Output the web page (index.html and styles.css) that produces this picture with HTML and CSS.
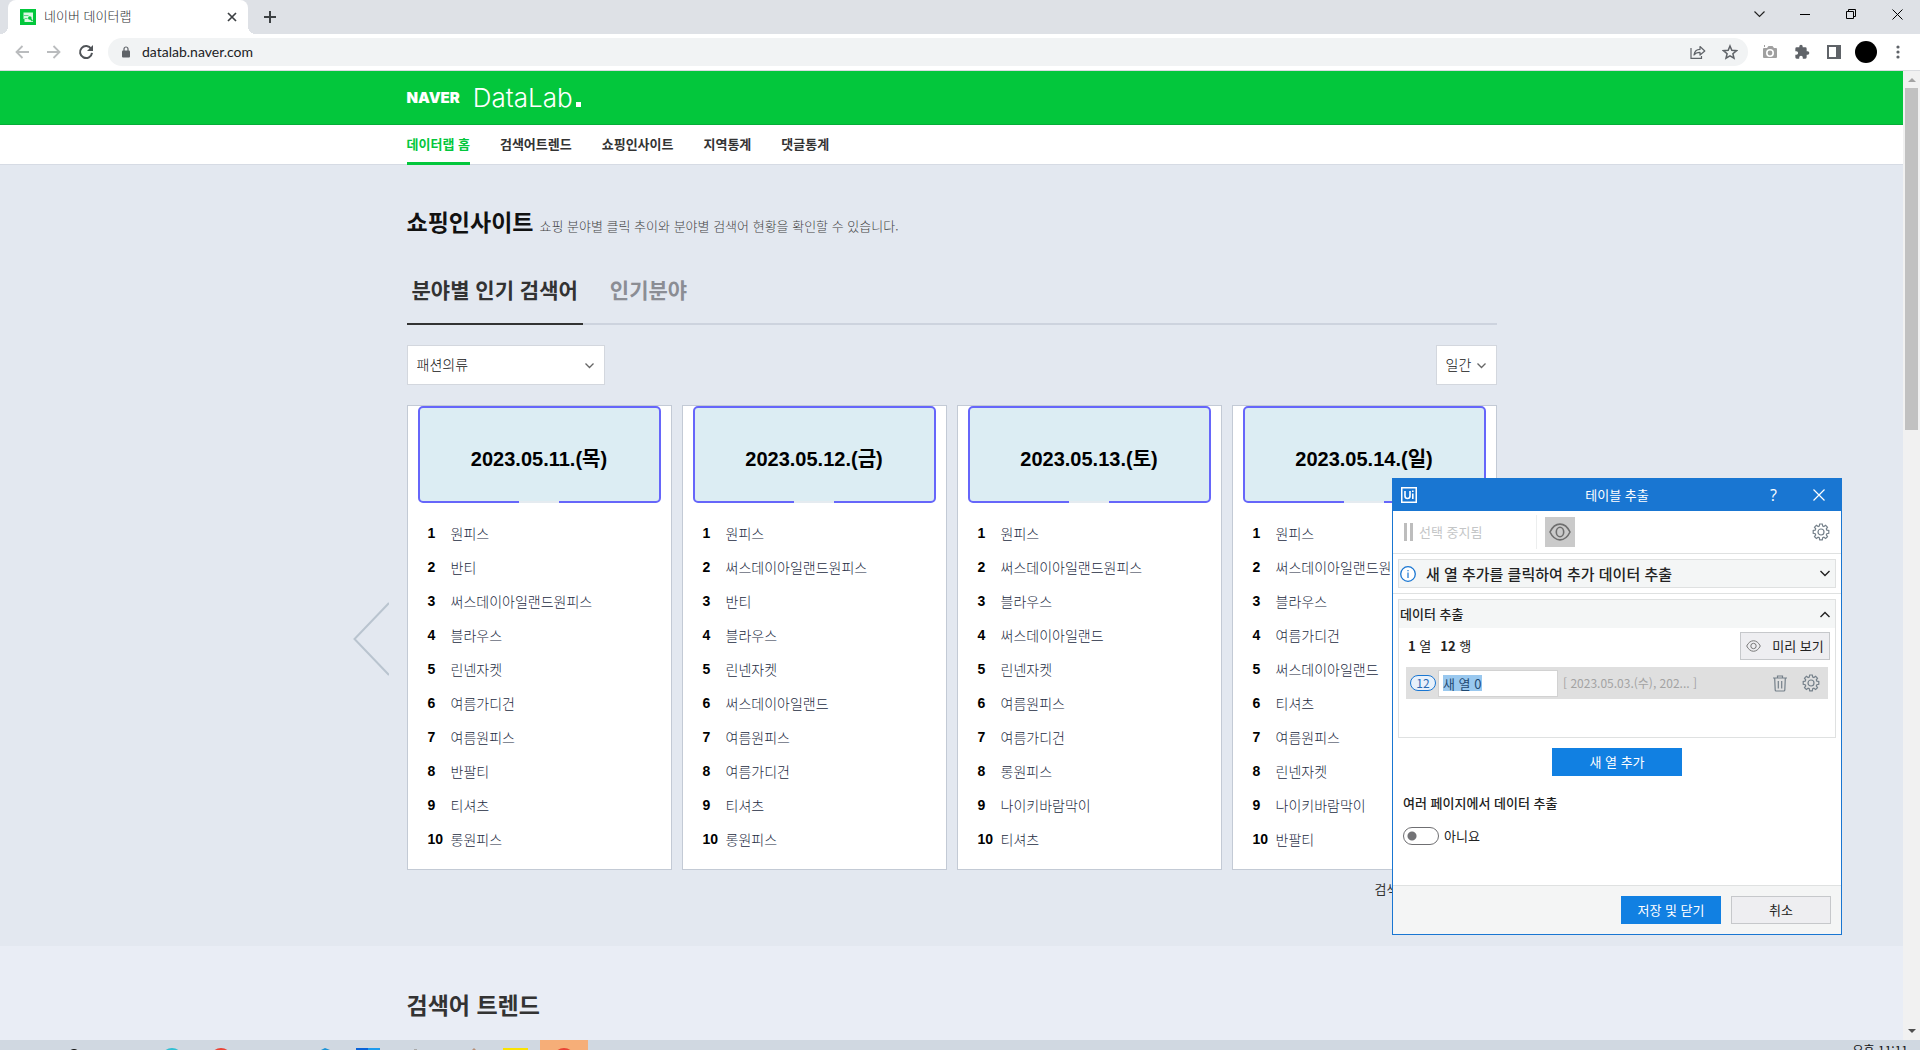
FILE: index.html
```html
<!DOCTYPE html>
<html lang="ko">
<head>
<meta charset="utf-8">
<meta name="viewport" content="width=device-width, initial-scale=1">
<title>네이버 데이터랩</title>
<link rel="stylesheet" href="styles.css">
</head>
<body>
<div class="tabstrip">
  <div class="tab">
    <svg class="favicon" width="16" height="16" viewBox="0 0 16 16"><rect width="16" height="16" fill="#03c73c"/><path d="M3.500 3.500H13V13H4.500V10H3.500z" fill="#dcf7e4"/><path d="M3.500 6.500h5M4.500 9.500h3" stroke="#5fdc85"/><circle cx="9.800" cy="9" r="1.800" fill="#03c73c"/><path d="M10.500 10l2 2" stroke="#03c73c" stroke-width="1.500"/></svg>
    <span class="tab-title">네이버 데이터랩</span>
    <button class="icon-btn tab-close" aria-label="탭 닫기"><svg width="10" height="10" viewBox="0 0 10 10"><path d="M1 1l8 8M9 1L1 9" stroke="#3c4043" stroke-width="1.700"/></svg></button>
  </div>
  <button class="icon-btn new-tab" aria-label="새 탭"><svg width="12" height="12" viewBox="0 0 12 12"><path d="M6 0v12M0 6h12" stroke="#3c4043" stroke-width="2"/></svg></button>
  <div class="window-controls">
    <button class="icon-btn" aria-label="탭 검색"><svg width="11" height="7" viewBox="0 0 11 7"><path d="M.5.5l5 5 5-5" fill="none" stroke="#222" stroke-width="1.200"/></svg></button>
    <button class="icon-btn" aria-label="최소화"><svg width="10" height="10" viewBox="0 0 10 10"><path d="M0 5.500h10" stroke="#000"/></svg></button>
    <button class="icon-btn" aria-label="이전 크기로 복원"><svg width="10" height="10" viewBox="0 0 10 10"><path d="M.5 2.500h7v7h-7zM2.500 2.500v-2h7v7h-2" fill="none" stroke="#000"/></svg></button>
    <button class="icon-btn" aria-label="닫기"><svg width="11" height="11" viewBox="0 0 11 11"><path d="M.5.5l10 10M10.500.5l-10 10" stroke="#000"/></svg></button>
  </div>
</div>

<div class="toolbar">
  <button class="icon-btn tool" aria-label="뒤로"><svg width="14" height="14" viewBox="0 0 14 14"><path d="M14 7H1.500M7.500 1l-6 6 6 6" fill="none" stroke="#babcbe" stroke-width="1.800"/></svg></button>
  <button class="icon-btn tool" aria-label="앞으로"><svg width="14" height="14" viewBox="0 0 14 14"><path d="M0 7h12.500M6.500 1l6 6-6 6" fill="none" stroke="#babcbe" stroke-width="1.800"/></svg></button>
  <button class="icon-btn tool" aria-label="새로고침"><svg width="16" height="16" viewBox="0 0 16 16"><path d="M13.200 5A6 6 0 1 0 14 8.800" fill="none" stroke="#505458" stroke-width="2"/><path d="M15 1v6H9z" fill="#505458"/></svg></button>
  <div class="omnibox">
    <svg width="8" height="12" viewBox="0 0 8 12"><rect y="4.500" width="8" height="7" rx="1" fill="#5f6368"/><path d="M2 5V3a2 2 0 0 1 4 0v2" fill="none" stroke="#5f6368" stroke-width="1.200"/></svg>
    <input class="url" type="text" value="datalab.naver.com" aria-label="주소창">
    <button class="icon-btn tool" aria-label="공유"><svg width="16" height="14" viewBox="0 0 16 14"><path d="M1 3v10.300h10.500V11" fill="none" stroke="#5f6368" stroke-width="1.200"/><path d="M4 10c.5-3.500 2.500-5.500 6-5.600V1.500L14.800 6 10 10V7.400C7.500 7.400 5.500 8 4 10z" fill="none" stroke="#5f6368" stroke-width="1.200" stroke-linejoin="round"/></svg></button>
    <button class="icon-btn tool" aria-label="북마크"><svg width="16" height="16" viewBox="0 0 16 16"><path d="M8 2l1.800 4.300 4.700.4-3.600 3 1.100 4.500L8 11.800l-4 2.400 1.100-4.500-3.600-3 4.700-.4z" fill="none" stroke="#5f6368" stroke-width="1.500"/></svg></button>
  </div>
  <button class="icon-btn tool" aria-label="화면 캡처"><svg width="16" height="14" viewBox="0 0 16 14"><path d="M2 3h3l1.500-2h4L12 3h2a1 1 0 0 1 1 1v8a1 1 0 0 1-1 1H2a1 1 0 0 1-1-1V4a1 1 0 0 1 1-1z" fill="#a0a0a0"/><circle cx="8" cy="8" r="3.200" fill="none" stroke="#fff" stroke-width="1.600"/><path d="M2.500 0v2" stroke="#a0a0a0"/></svg></button>
  <button class="icon-btn tool" aria-label="확장 프로그램"><svg width="16" height="16" viewBox="0 0 24 24"><path fill="#5f6368" d="M20.500 11H19V7a2 2 0 0 0-2-2h-4V3.500a2.500 2.500 0 0 0-5 0V5H4a2 2 0 0 0-2 2v3.800h1.500a2.700 2.700 0 0 1 0 5.400H2V20a2 2 0 0 0 2 2h3.800v-1.500a2.700 2.700 0 0 1 5.400 0V22H17a2 2 0 0 0 2-2v-4h1.500a2.500 2.500 0 0 0 0-5z"/></svg></button>
  <button class="icon-btn tool" aria-label="측면 패널"><svg width="14" height="14" viewBox="0 0 14 14"><rect x="1" y="1" width="12" height="12" fill="none" stroke="#5f6368" stroke-width="2"/><rect x="9" width="5" height="14" fill="#5f6368"/></svg></button>
  <button class="icon-btn tool" aria-label="프로필"><span class="avatar"></span></button>
  <button class="icon-btn tool" aria-label="메뉴"><svg width="4" height="14" viewBox="0 0 4 14"><g fill="#5f6368"><circle cx="2" cy="2" r="1.600"/><circle cx="2" cy="7" r="1.600"/><circle cx="2" cy="12" r="1.600"/></g></svg></button>
</div>

<div class="viewport">
  <div class="page">
    <header class="site-header">
      <div class="wrap">
        <a class="logo" href="#"><span class="logo-naver">NAVER</span><span class="logo-lab">DataLab<i></i></span></a>
      </div>
    </header>
    <nav class="site-nav">
      <div class="wrap">
        <a class="active" href="#">데이터랩 홈</a><a href="#">검색어트렌드</a><a href="#">쇼핑인사이트</a><a href="#">지역통계</a><a href="#">댓글통계</a>
      </div>
    </nav>
    <main>
      <section class="insight">
        <div class="wrap">
          <div class="section-head"><h2>쇼핑인사이트</h2><p>쇼핑 분야별 클릭 추이와 분야별 검색어 현황을 확인할 수 있습니다.</p></div>
          <div class="subtabs"><a class="active" href="#">분야별 인기 검색어</a><a href="#">인기분야</a></div>
          <div class="filters">
            <div class="select select-category"><select aria-label="분야"><option>패션의류</option></select><svg width="9" height="6" viewBox="0 0 9 6"><path d="M.5.5l4 4 4-4" fill="none" stroke="#666" stroke-width="1.300"/></svg></div>
            <div class="select select-period"><select aria-label="기간"><option>일간</option></select><svg width="9" height="6" viewBox="0 0 9 6"><path d="M.5.5l4 4 4-4" fill="none" stroke="#666" stroke-width="1.300"/></svg></div>
          </div>
          <div class="carousel">
            <button class="icon-btn prev" aria-label="이전"><svg width="36" height="74" viewBox="0 0 36 74"><path d="M36 1L1.500 37 36 73" fill="none" stroke="#b9c4cf" stroke-width="2"/></svg></button>
            <article class="card"><h3>2023.05.11.(목)</h3><ol><li><b>1</b>원피스</li><li><b>2</b>반티</li><li><b>3</b>써스데이아일랜드원피스</li><li><b>4</b>블라우스</li><li><b>5</b>린넨자켓</li><li><b>6</b>여름가디건</li><li><b>7</b>여름원피스</li><li><b>8</b>반팔티</li><li><b>9</b>티셔츠</li><li><b>10</b>롱원피스</li></ol></article>
            <article class="card"><h3>2023.05.12.(금)</h3><ol><li><b>1</b>원피스</li><li><b>2</b>써스데이아일랜드원피스</li><li><b>3</b>반티</li><li><b>4</b>블라우스</li><li><b>5</b>린넨자켓</li><li><b>6</b>써스데이아일랜드</li><li><b>7</b>여름원피스</li><li><b>8</b>여름가디건</li><li><b>9</b>티셔츠</li><li><b>10</b>롱원피스</li></ol></article>
            <article class="card"><h3>2023.05.13.(토)</h3><ol><li><b>1</b>원피스</li><li><b>2</b>써스데이아일랜드원피스</li><li><b>3</b>블라우스</li><li><b>4</b>써스데이아일랜드</li><li><b>5</b>린넨자켓</li><li><b>6</b>여름원피스</li><li><b>7</b>여름가디건</li><li><b>8</b>롱원피스</li><li><b>9</b>나이키바람막이</li><li><b>10</b>티셔츠</li></ol></article>
            <article class="card"><h3>2023.05.14.(일)</h3><ol><li><b>1</b>원피스</li><li><b>2</b>써스데이아일랜드원피스</li><li><b>3</b>블라우스</li><li><b>4</b>여름가디건</li><li><b>5</b>써스데이아일랜드</li><li><b>6</b>티셔츠</li><li><b>7</b>여름원피스</li><li><b>8</b>린넨자켓</li><li><b>9</b>나이키바람막이</li><li><b>10</b>반팔티</li></ol></article>
          </div>
          <div class="more"><a href="#">검색어</a></div>
        </div>
      </section>
      <section class="trend">
        <div class="wrap"><h2>검색어 트렌드</h2></div>
      </section>
    </main>
  </div>
  <div class="scrollbar">
    <svg width="8" height="17" viewBox="0 0 8 17"><path d="M0 11l4-4 4 4z" fill="#a3a3a3"/></svg>
    <span class="track"><span class="thumb"></span></span>
    <svg width="8" height="17" viewBox="0 0 8 17"><path d="M0 6l4 4 4-4z" fill="#505050"/></svg>
  </div>
</div>

<footer class="taskbar">
  <svg width="600" height="10" viewBox="0 0 600 10">
    <rect x="540" width="48" height="10" fill="#f6ae78"/>
    <circle cx="74" cy="15" r="6" fill="#111"/>
    <circle cx="172" cy="19" r="11" fill="#31bfd3"/>
    <circle cx="221" cy="19" r="11" fill="#ea4335"/>
    <path d="M321 10l4-2 5 2z" fill="#1c93d6"/>
    <rect x="356" y="8" width="12" height="2" fill="#0a63d8"/><rect x="368" y="8" width="12" height="2" fill="#1d9bee"/>
    <path d="M414 9h3v1h-3z" fill="#aaa"/><path d="M472 10l2-2 2 2z" fill="#b89078"/>
    <rect x="503" y="8" width="25" height="2" fill="#fbe300"/>
    <circle cx="564" cy="19" r="11" fill="#ea4335"/>
  </svg>
  <span class="clock">오후 11:11</span>
</footer>

<div class="dialog" role="dialog" aria-labelledby="dialog-title">
  <div class="titlebar">
    <svg width="16" height="16" viewBox="0 0 16 16"><rect x=".75" y=".75" width="14.500" height="14.500" fill="none" stroke="#fff" stroke-width="1.500"/><path d="M4 4v5a2.500 2.500 0 0 0 5 0V4M11.800 6.500V12M11.800 3.500V5" fill="none" stroke="#fff" stroke-width="1.600"/></svg>
    <h1 id="dialog-title">테이블 추출</h1>
    <button class="icon-btn help" aria-label="도움말">?</button>
    <button class="icon-btn" aria-label="닫기"><svg width="12" height="12" viewBox="0 0 12 12"><path d="M.5.5l11 11M11.500.5l-11 11" stroke="#fff" stroke-width="1.200"/></svg></button>
  </div>
  <div class="dialog-tools">
    <button class="pause" disabled><svg width="9" height="18" viewBox="0 0 9 18"><path d="M0 0h3v18H0zM6 0h3v18H6z" fill="#bdbdbd"/></svg>선택 중지됨</button>
    <button class="icon-btn eye" aria-label="강조 표시"><svg width="22" height="18" viewBox="0 0 22 18"><path d="M1 9c5-10.500 15-10.500 20 0-5 10.500-15 10.500-20 0z" fill="none" stroke="#6e6e6e" stroke-width="1.600"/><ellipse cx="11" cy="9" rx="3.700" ry="4.700" fill="none" stroke="#6e6e6e" stroke-width="1.600"/></svg></button>
    <button class="icon-btn gear-btn" aria-label="설정"><svg class="gear" width="18" height="18" viewBox="0 0 18 18"><use href="#gear"/></svg></button>
  </div>
  <div class="info-zone">
    <button class="info"><svg width="16" height="16" viewBox="0 0 16 16"><circle cx="8" cy="8" r="7.300" fill="#fff" stroke="#1976d2" stroke-width="1.300"/><path d="M8 6.500V12M8 4v1.300" stroke="#1976d2" stroke-width="1.200"/></svg><span>새 열 추가를 클릭하여 추가 데이터 추출</span><svg width="10" height="7" viewBox="0 0 10 7"><path d="M.5 1L5 5.500 9.500 1" fill="none" stroke="#222" stroke-width="1.400"/></svg></button>
  </div>
  <div class="dialog-body">
    <div class="group">
      <button class="group-head"><span>데이터 추출</span><svg width="10" height="7" viewBox="0 0 10 7"><path d="M.5 6L5 1.500 9.500 6" fill="none" stroke="#222" stroke-width="1.400"/></svg></button>
      <div class="summary">
        <p><b>1</b> 열<span><b>12</b> 행</span></p>
        <button class="btn preview"><svg width="15" height="12" viewBox="0 0 15 12"><path d="M.7 6c3.400-7 10.200-7 13.600 0-3.400 7-10.200 7-13.600 0z" fill="none" stroke="#777"/><circle cx="7.500" cy="6" r="2.700" fill="none" stroke="#777"/></svg>미리 보기</button>
      </div>
      <div class="column-row">
        <span class="count">12</span>
        <input class="col-name" type="text" value="새 열 0" aria-label="열 이름">
        <span class="sample">[ 2023.05.03.(수), 202... ]</span>
        <button class="icon-btn" aria-label="열 삭제"><svg width="14" height="17" viewBox="0 0 14 17"><path d="M0 3h14M4.500 3V1h5v2M1.700 3.500l.5 11.500q0 1 1 1h7.600q1 0 1-1l.5-11.500M5.300 6v7.500M8.700 6v7.500" fill="none" stroke="#75808a" stroke-width="1.200"/></svg></button>
        <button class="icon-btn" aria-label="열 설정"><svg class="gear" width="18" height="18" viewBox="0 0 18 18"><g id="gear" fill="none" stroke="#75808a" stroke-width="1.200"><circle cx="9" cy="9" r="3"/><path d="M7.700 1h2.600l.4 2 1.200.5 1.700-1.200 1.900 1.900-1.200 1.700.5 1.200 2 .4v2.800l-2 .4-.5 1.200 1.200 1.700-1.900 1.900-1.700-1.200-1.200.5-.4 2.100H7.700l-.4-2.100-1.200-.5-1.700 1.200-1.900-1.900 1.200-1.700-.5-1.200-2-.4V7.500l2-.4.5-1.200-1.200-1.700 1.900-1.900 1.700 1.200 1.200-.5z"/></g></svg></button>
      </div>
    </div>
    <button class="btn primary add">새 열 추가</button>
    <h4>여러 페이지에서 데이터 추출</h4>
    <label class="toggle"><input type="checkbox">아니요</label>
  </div>
  <div class="dialog-foot">
    <button class="btn primary">저장 및 닫기</button>
    <button class="btn">취소</button>
  </div>
</div>
</body>
</html>
```

FILE: styles.css
```css
* { box-sizing: border-box; }

body {
  margin: 0;
  height: 100vh;
  display: flex;
  flex-direction: column;
  overflow: hidden;
  position: relative;
  font-family: "Noto Sans CJK KR", sans-serif;
  font-size: 13px;
  line-height: 20px;
  color: #333;
}

h1, h2, h3, h4, p, ol { margin: 0; padding: 0; }
ol { list-style: none; }
a { color: inherit; text-decoration: none; }
svg { display: block; flex: none; }
button, input, select { font: inherit; color: inherit; margin: 0; }

.icon-btn {
  display: flex;
  align-items: center;
  justify-content: center;
  padding: 0;
  border: 0;
  background: none;
}

/* Browser frame */
.tabstrip {
  flex: none;
  height: 34px;
  display: flex;
  padding-left: 8px;
  background: #dee1e6;
}
.tab {
  position: relative;
  width: 240px;
  display: flex;
  align-items: center;
  padding: 0 8px 0 12px;
  background: #fff;
  border-radius: 8px 8px 0 0;
}
.tab::before, .tab::after {
  content: "";
  position: absolute;
  bottom: 0;
  width: 8px;
  height: 8px;
}
.tab::before { right: 100%; background: radial-gradient(circle at 0 0, #dee1e6 8px, #fff 8px); }
.tab::after { left: 100%; background: radial-gradient(circle at 100% 0, #dee1e6 8px, #fff 8px); }
.tab-title { flex: 1; margin-left: 8px; padding-bottom: 2px; color: #2c2f33; font-weight: 300; }
.tab-close { width: 16px; height: 16px; }
.new-tab { width: 44px; height: 34px; }
.window-controls { margin-left: auto; display: flex; height: 28px; }
.window-controls .icon-btn { width: 46px; }

.toolbar {
  flex: none;
  height: 37px;
  display: flex;
  align-items: center;
  padding: 0 6px;
  background: #fff;
  border-bottom: 1px solid #dadce0;
}
.tool { width: 32px; height: 28px; }
.omnibox {
  flex: 1;
  height: 28px;
  display: flex;
  align-items: center;
  margin: 0 6px;
  padding: 0 2px 0 14px;
  background: #f1f3f4;
  border-radius: 14px;
}
.url {
  flex: 1;
  padding: 0;
  margin-left: 12px;
  border: 0;
  background: none;
  font-family: "Lato", sans-serif;
  font-size: 14px;
  color: #202124;
}
.avatar { width: 22px; height: 22px; border-radius: 50%; background: #000; }

.viewport { flex: 1; min-height: 0; display: flex; }
.page { flex: 1; min-width: 0; overflow: hidden; background: #e9edf5; }
.scrollbar {
  width: 17px;
  display: flex;
  flex-direction: column;
  align-items: center;
  background: #f1f1f1;
}
.track { flex: 1; }
.thumb { display: block; width: 13px; height: 342px; background: #c1c1c1; }

/* DataLab page */
.wrap { max-width: 1090px; margin: 0 auto; }
.site-header { background: #03c73c; border-bottom: 1px solid #06ac38; }
.site-header .wrap { height: 53px; display: flex; align-items: center; }
.logo { display: flex; align-items: center; gap: 13px; color: #fff; }
.logo-naver { font-family: "Inter", sans-serif; font-weight: 900; font-size: 15px; }
.logo-lab {
  display: flex;
  align-items: baseline;
  gap: 3px;
  font-family: "Inter", sans-serif;
  font-weight: 300;
  font-size: 26px;
}
.logo-lab i { width: 5px; height: 5px; background: #fff; }

.site-nav { background: #fff; border-bottom: 1px solid #d6dbe4; }
.site-nav .wrap { display: flex; gap: 30px; height: 39px; }
.site-nav a { height: 40px; line-height: 38px; font-weight: 700; }
.site-nav .active { color: #03c73c; border-bottom: 3px solid #03c73c; }

.insight { padding: 40px 0 47px; background: #e3e8f0; }
.section-head { display: flex; align-items: baseline; gap: 6px; }
h2 { font-size: 23px; line-height: 32px; }
.section-head h2 { color: #111; }
.section-head p { color: #444; font-weight: 300; }

.subtabs {
  display: flex;
  gap: 22px;
  margin-top: 30px;
  border-bottom: 2px solid #cdd3de;
  font-size: 21px;
  font-weight: 700;
  line-height: 44px;
}
.subtabs a { margin-bottom: -2px; padding: 0 5px 12px; color: #8b8d94; border-bottom: 2px solid transparent; }
.subtabs .active { color: #333; border-color: #333; }

.filters { display: flex; justify-content: space-between; margin: 20px 0; }
.select { position: relative; }
.select select {
  appearance: none;
  width: 100%;
  height: 40px;
  padding: 0 9px 2px;
  border: 1px solid #d3d7de;
  border-radius: 0;
  background: #fff;
  color: #111;
  font-size: 14px;
  font-weight: 300;
}
.select svg { position: absolute; right: 11px; top: 18px; pointer-events: none; }
.select-category { width: 198px; }
.select-period { width: 61px; }

.carousel {
  position: relative;
  display: grid;
  grid-template-columns: repeat(4, 1fr);
  gap: 10px;
}
.prev { position: absolute; right: 100%; top: 197px; margin-right: 18px; }
.card { padding: 0 10px 13px; background: #fff; border: 1px solid #c3cad5; }
.card h3 {
  position: relative;
  height: 97px;
  padding-top: 7px;
  border: 2px solid #6666fa;
  border-radius: 5px;
  background: #dcedf3;
  color: #000;
  font-family: "Liberation Sans", "Noto Sans CJK KR", sans-serif;
  font-size: 20px;
  line-height: 88px;
  text-align: center;
}
.card h3::after {
  content: "";
  position: absolute;
  left: 50%;
  bottom: -2px;
  width: 40px;
  height: 2px;
  margin-left: -20px;
  background: #e5ebf0;
}
.card ol { padding: 13px 0 0 10px; }
.card li { display: flex; font-size: 14px; font-weight: 300; line-height: 34px; color: #232b3f; }
.card b {
  width: 23px;
  font-family: "Liberation Sans", sans-serif;
  font-weight: 700;
  color: #000;
}
.more { display: flex; justify-content: flex-end; margin-top: 9px; }
.more a { width: 122px; }
.trend { padding: 42px 0; }

.taskbar {
  flex: none;
  height: 10px;
  display: flex;
  justify-content: space-between;
  overflow: hidden;
  padding-right: 12px;
  background: #d0d8e1;
}
.clock { font-size: 12px; line-height: 19px; color: #111; }

/* Table extraction window */
.dialog {
  position: absolute;
  top: 478px;
  right: 78px;
  width: 450px;
  display: flex;
  flex-direction: column;
  background: #fff;
  border: 1px solid #1976d2;
  color: #222;
  font-family: "Noto Sans CJK KR", sans-serif;
}
.dialog::before {
  content: "";
  position: absolute;
  z-index: -1;
  inset: 0 0 80px;
  box-shadow: 0 0 14px rgba(0, 0, 0, 0.5);
}
.titlebar {
  display: flex;
  align-items: center;
  height: 32px;
  padding-left: 8px;
  background: #1976d2;
  color: #fff;
}
.titlebar h1 { flex: 1; padding-left: 66px; font-size: 13px; font-weight: 400; text-align: center; }
.titlebar .icon-btn { width: 45px; height: 32px; }
.help { font-family: "Open Sans", sans-serif; font-size: 16px; }
.dialog-tools {
  display: flex;
  align-items: center;
  height: 43px;
  padding: 0 11px;
  border-bottom: 1px solid #dfe1e1;
}
.pause {
  display: flex;
  align-items: center;
  gap: 6px;
  width: 133px;
  height: 34px;
  padding: 0;
  border: 0;
  border-right: 1px solid #eceeee;
  background: none;
  color: #c4c6c7;
}
.eye { width: 30px; height: 30px; margin-left: 8px; background: #cacaca; }
.gear-btn { width: 18px; height: 18px; margin-left: auto; }
.info-zone { padding: 5px; border-bottom: 1px solid #dfe1e1; }
.info {
  display: flex;
  align-items: center;
  width: 100%;
  height: 29px;
  padding: 0 5px 0 1px;
  border: 1px solid #dfe1e1;
  background: #f4f6f6;
  font-size: 15px;
  font-weight: 500;
  text-align: left;
}
.info span { flex: 1; padding-left: 10px; }

.dialog-body { display: flex; flex-direction: column; height: 291px; padding: 5px; }
.group { height: 139px; border: 1px solid #dfe1e1; }
.group-head {
  display: flex;
  align-items: center;
  justify-content: space-between;
  width: 100%;
  height: 28px;
  padding: 0 5px 0 1px;
  border: 0;
  background: #f4f6f6;
  font-weight: 500;
}
.summary { display: flex; align-items: center; justify-content: space-between; padding: 4px 5px 7px 9px; }
.summary b { font-weight: 700; }
.summary span { margin-left: 9px; }
.btn {
  width: 100px;
  height: 28px;
  padding: 0;
  border: 1px solid #c6c8cb;
  background: #eeeef1;
}
.preview { display: flex; align-items: center; justify-content: center; gap: 11px; width: 90px; }
.primary { border: 0; background: #1180e2; color: #fff; }
.column-row {
  display: flex;
  align-items: center;
  height: 32px;
  margin: 0 7px;
  padding: 0 8px 0 4px;
  background: #dfdfdf;
}
.count {
  width: 26px;
  height: 16px;
  border: 1px solid #1976d2;
  border-radius: 8px;
  background: #e8f1fb;
  color: #2a6cb5;
  font-size: 12px;
  line-height: 14px;
  text-align: center;
}
.col-name {
  width: 120px;
  height: 27px;
  margin: 0 5px 0 2px;
  padding: 0 4px;
  border: 1px solid #d2d2d2;
  background: linear-gradient(#99c8ef, #99c8ef) 4px 4px / 39px 16px no-repeat #fff;
  color: #1f4a73;
}
.sample { flex: 1; color: #a3a3a3; font-size: 12px; }
.column-row .icon-btn { width: 18px; height: 18px; margin-left: 13px; }
.add { align-self: center; width: 130px; margin-top: 10px; }
h4 { margin: 17px 0 0 5px; font-size: 13px; font-weight: 500; }
.toggle { display: flex; align-items: center; gap: 5px; margin: 13px 0 0 5px; }
.toggle input {
  appearance: none;
  width: 36px;
  height: 18px;
  border: 1px solid #6f6f72;
  border-radius: 9px;
  background: radial-gradient(circle at 8px 50%, #737376 4px, #fff 5px);
}
.dialog-foot {
  display: flex;
  justify-content: flex-end;
  gap: 10px;
  padding: 10px;
  border-top: 1px solid #dfe1e1;
  background: #f4f5f5;
}
```
